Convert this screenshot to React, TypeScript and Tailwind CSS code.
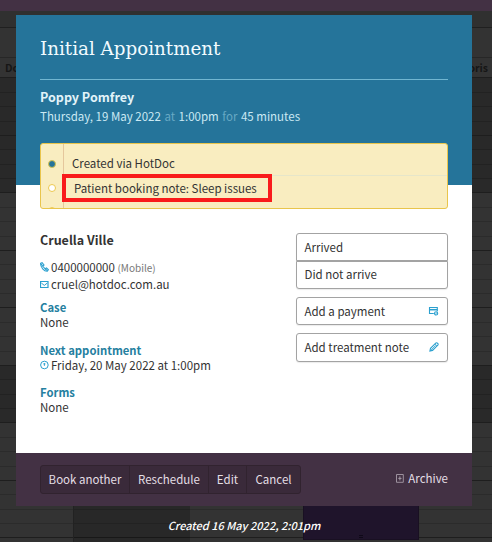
import type { ReactNode } from 'react'

interface BandProps {
  tone: string
  height: string
}

const BANDS: BandProps[] = [
  { tone: 'bg-[#292929]', height: 'h-[58px]' },
  { tone: 'bg-[#292929]', height: 'h-[57px]' },
  { tone: 'bg-[#333333]', height: 'h-[58px]' },
  { tone: 'bg-[#333333]', height: 'h-[57px]' },
  { tone: 'bg-[#333333]', height: 'h-[58px]' },
  { tone: 'bg-[#292929]', height: 'h-[57px]' },
  { tone: 'bg-[#333333]', height: 'h-[58px]' },
  { tone: 'bg-[#333333]', height: 'h-[57px]' },
  { tone: 'bg-[#333333]', height: 'h-[58px]' },
]

function HourBand({ tone, height }: BandProps) {
  return (
    <div className={`flex shrink-0 flex-col border-t border-[#1e1e1e] ${tone} ${height}`}>
      <div className="flex-1 border-b border-black/15" />
      <div className="flex-1 border-b border-black/15" />
      <div className="flex-1 border-b border-black/15" />
      <div className="flex-1" />
    </div>
  )
}

function Calendar() {
  return (
    <div className="absolute inset-0 flex flex-col overflow-hidden bg-[#333333]">
      <div className="h-[11px] shrink-0 bg-[#433144]" />
      <div className="h-[17px] shrink-0 border-b border-[#202020] bg-[#303030]" />
      <div className="h-[30px] shrink-0 border-b border-[#272727]" />
      <div className="flex h-[19px] shrink-0 items-center justify-between pl-[5px] pr-[4px] text-[10.5px] font-bold text-[#161616]">
        <span>Do</span>
        <span>oris</span>
      </div>
      {BANDS.map((band, i) => (
        <HourBand key={i} {...band} />
      ))}
      {/* Booked slots showing below the dialog */}
      <div className="absolute left-[73px] top-[480px] h-[62px] w-[117px] border-l border-[#222222] bg-black/20" />
      <div className="absolute left-[303px] top-[480px] flex h-[60px] w-[116px] items-end justify-center border border-[#191022] bg-[#1f142b] pb-px">
        <div className="h-[3px] w-1 border-y border-[#0f0918]" />
      </div>
    </div>
  )
}

function PhoneIcon() {
  return (
    <svg viewBox="0 0 9 10" className="h-[10px] w-[9px]" fill="none" stroke="#2ba0cf" strokeWidth="1.1">
      <path d="M.6 1.3 2.1.7 4 3 2.9 4.3 5.1 6.8 6.5 6 8.4 7.7 7.3 9.2C4.2 9.4.3 5.2.6 1.3Z" />
      <path d="m1.2 1.9 1.5 2.4M5.2 7l2.1 1.5" />
    </svg>
  )
}

function MailIcon() {
  return (
    <svg viewBox="0 0 9 8" className="mt-0.5 h-2 w-[9px]" fill="none" stroke="#2ba0cf">
      <path d="M.5.5h7.5v6H.5Z" strokeWidth="1.2" />
      <path d="m1.3 2 3 2.4 3-2.4" />
    </svg>
  )
}

function ClockIcon() {
  return (
    <svg viewBox="0 0 9 10" className="h-[10px] w-[9px]" fill="none" stroke="#2ba0cf" strokeWidth="1">
      <circle cx="4.4" cy="5" r="3.8" />
      <path d="M4.4 3.2v2.6M3.4 3.9h2" />
    </svg>
  )
}

function CardIcon() {
  return (
    <svg viewBox="0 0 11 9" className="mt-0.5 h-[9px] w-[11px]" fill="none" stroke="#2ba0cf" strokeWidth="1.1">
      <path d="M5.8 6.5H1.5v-6h7.8v3.7" />
      <path d="M1 2.7h8.3" strokeWidth="1.5" />
      <circle cx="8.1" cy="6.4" r="1.6" />
      <path d="m7.3 7.2 1.7-1.6" strokeWidth="0.8" />
    </svg>
  )
}

function PencilIcon() {
  return (
    <svg viewBox="0 0 10 10" className="h-[10px] w-[10px]" fill="none" stroke="#2ba0cf" strokeWidth="1.1">
      <path d="m.9 9.1.6-2.7L7 .9c.8-.6 2.6.9 2 1.9L3.5 8.4Z" />
      <path d="M1.5 6.4 3.5 8.4M6 1.9l2 2M3 7l3.7-3.7" strokeWidth="0.8" />
    </svg>
  )
}

function ArchiveIcon() {
  return (
    <svg viewBox="0 0 8 9" className="h-[9px] w-2" fill="none" stroke="#a69ba7">
      <path d="M.5.5h6.8v7.8H.5Z" strokeWidth="0.9" />
      <path d="M3.9 2.4v4M2.3 4.4h3.2" />
    </svg>
  )
}

function ActionButton({ children, icon, className = '' }: { children: ReactNode; icon?: ReactNode; className?: string }) {
  return (
    <button
      className={`flex w-full items-center justify-between border border-[#a3a3a3] bg-white pl-[7.5px] pr-2 text-left shadow-[0_1px_1px_rgba(0,0,0,0.08)] ${className}`}
    >
      {children}
      {icon}
    </button>
  )
}

export default function App() {
  return (
    <div className="relative h-[542px] w-[492px] overflow-hidden font-['Noto_Sans_CJK_SC','Noto_Sans',sans-serif] text-[11.5px] leading-[18px] text-[#333333]">
      <Calendar />

      <div className="relative ml-4 flex h-full w-[456px] flex-col pt-[15px]">
        <header className="h-[170px] shrink-0 bg-[#25749a] px-6 text-[#e2f3f9]">
          <h1 className="h-[65px] whitespace-nowrap border-b border-[#71b6d1] pt-[22px] font-['DejaVu_Serif',serif] text-[18.3px] leading-6 text-[#f2fbff]">
            Initial Appointment
          </h1>
          <h2 className="mt-[8px] text-[12.5px] font-bold leading-[18px]">Poppy Pomfrey</h2>
          <p className="mt-px whitespace-nowrap text-[#cbe9f3]">
            Thursday, 19 May 2022 <span className="mx-px text-[#67a9c4]">at</span> 1:00pm{' '}
            <span className="mx-px text-[#67a9c4]">for</span> 45 minutes
          </p>
        </header>

        <main className="h-[268px] shrink-0 bg-white px-6">
          {/* Notes overlap the header */}
          <section className="relative -mt-[42px] flex h-[66px] overflow-hidden rounded-[3px] border border-[#e9c54c] bg-[#f9edc0]">
            <div className="flex w-[23px] shrink-0 flex-col items-center border-r border-[#e5c79c] pt-4">
              <div className="h-2 w-2 shrink-0 rounded-full border border-[#d6c34f] bg-[#25749a]" />
              <div className="mt-4 h-2 w-2 shrink-0 rounded-full border border-[#edc94f] bg-white" />
              <div className="mt-[15px] h-2 w-2 shrink-0 rounded-full border border-[#edc94f] bg-white" />
            </div>
            <div className="flex-1">
              <p className="h-8 border-b border-[#e6e6ca] pl-2 pt-[10px]">Created via HotDoc</p>
              <p className="-ml-[2px] -mt-[2px] flex h-7 w-[210px] items-center whitespace-nowrap border-4 border-[#f91b1b] pb-px pl-2">
                Patient booking note: Sleep issues
              </p>
            </div>
          </section>

          <div className="flex justify-between">
            <section className="pt-[22px]">
              <h3 className="text-[12.5px] font-bold leading-[18px]">Cruella Ville</h3>
              <p className="mt-[9px] flex h-[18px] items-center gap-[2px]">
                <PhoneIcon />
                <span>
                  0400000000 <span className="text-[10px] text-[#777777]">(Mobile)</span>
                </span>
              </p>
              <p className="flex h-4 items-center gap-[2px]">
                <MailIcon />
                cruel@hotdoc.com.au
              </p>
              <h4 className="mt-2 text-[11.3px] font-bold leading-[15px] text-[#25809f]">Case</h4>
              <p className="leading-[15px]">None</p>
              <h4 className="mt-[13px] text-[11.3px] font-bold leading-[15px] text-[#25809f]">Next appointment</h4>
              <p className="flex items-center gap-[2px] leading-[14px]">
                <ClockIcon />
                Friday, 20 May 2022 at 1:00pm
              </p>
              <h4 className="mt-[13px] text-[11.3px] font-bold leading-[15px] text-[#25809f]">Forms</h4>
              <p className="leading-[15px]">None</p>
            </section>

            <section className="w-[152px] pt-6">
              <ActionButton className="h-7 rounded-t-[3px] pb-px">Arrived</ActionButton>
              <ActionButton className="h-7 rounded-b-[3px] pb-[2px]">Did not arrive</ActionButton>
              <ActionButton className="mt-2 h-7 rounded-[3px] pb-px" icon={<CardIcon />}>
                Add a payment
              </ActionButton>
              <ActionButton className="mt-2 h-[29px] rounded-[3px] pb-[2px]" icon={<PencilIcon />}>
                Add treatment note
              </ActionButton>
            </section>
          </div>
        </main>

        <footer className="flex h-[53px] shrink-0 items-start justify-between bg-[#433144] px-6 pt-3 text-[#e4dfe5]">
          <div className="flex h-[29px] rounded-[3px] border border-[#31232f] bg-[#3a2a3a]">
            <button className="w-[89px] border-r border-[#31232f] pb-[2px]">Book another</button>
            <button className="w-[79px] border-r border-[#31232f] pb-[2px]">Reschedule</button>
            <button className="w-[38px] border-r border-[#31232f] pb-[2px]">Edit</button>
            <button className="w-[53px] pb-[2px]">Cancel</button>
          </div>
          <button className="mt-1 flex items-center gap-1">
            <ArchiveIcon />
            Archive
          </button>
        </footer>

        <p className="mt-[10px] text-center text-[11px] font-medium italic text-white">Created 16 May 2022, 2:01pm</p>
      </div>
    </div>
  )
}
